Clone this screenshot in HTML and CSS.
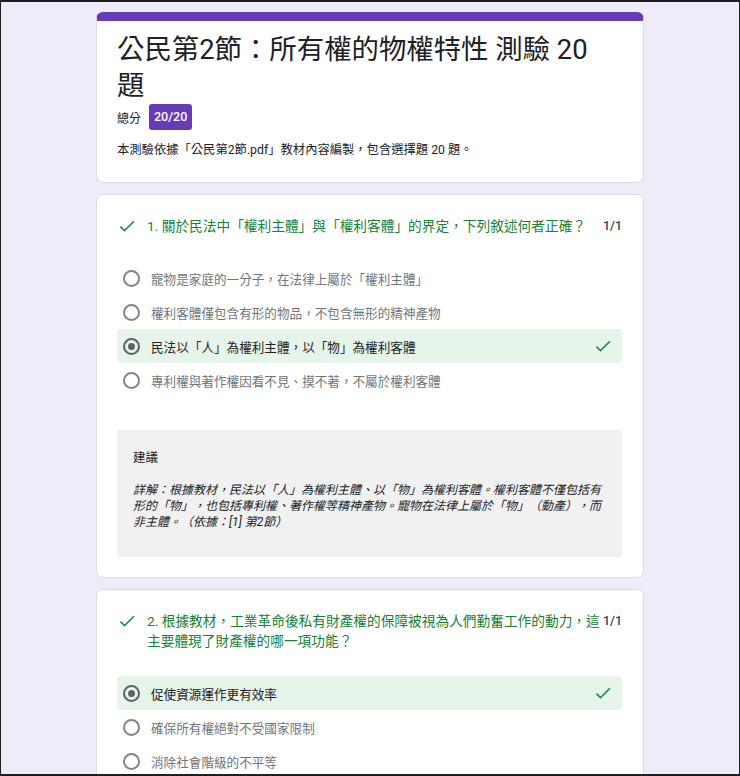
FILE: index.html
```html
<!DOCTYPE html>
<html lang="zh-Hant">
<head>
  <meta charset="UTF-8">
  <meta name="viewport" content="width=device-width, initial-scale=1.0">
  <title>公民第2節 測驗</title>
  <link rel="stylesheet" href="styles.css">
</head>
<body>

<div class="frame">
  <div class="container">

    <div class="card header-card">
      <h1 class="quiz-title">公民第2節：所有權的物權特性 測驗 20 題</h1>
      <div class="score-row">
        <span class="score-label">總分</span>
        <span class="score-badge">20/20</span>
      </div>
      <p class="quiz-desc">本測驗依據「公民第2節.pdf」教材內容編製，包含選擇題 20 題。</p>
    </div>

    <div class="card question-card">
      <div class="q-header">
        <svg class="q-check" viewBox="0 0 24 24"><path d="M9 16.17L4.83 12l-1.42 1.41L9 19 21 7l-1.41-1.41z"/></svg>
        <div class="q-text">1. 關於民法中「權利主體」與「權利客體」的界定，下列敘述何者正確？</div>
        <div class="q-points">1/1</div>
      </div>
      <ul class="options">
        <li class="option"><span class="radio"></span><span class="opt-text">寵物是家庭的一分子，在法律上屬於「權利主體」</span></li>
        <li class="option"><span class="radio"></span><span class="opt-text">權利客體僅包含有形的物品，不包含無形的精神產物</span></li>
        <li class="option correct"><span class="radio"></span><span class="opt-text">民法以「人」為權利主體，以「物」為權利客體</span>
          <svg class="opt-check" viewBox="0 0 24 24"><path d="M9 16.17L4.83 12l-1.42 1.41L9 19 21 7l-1.41-1.41z"/></svg></li>
        <li class="option"><span class="radio"></span><span class="opt-text">專利權與著作權因看不見、摸不著，不屬於權利客體</span></li>
      </ul>
      <div class="feedback">
        <div class="feedback-title">建議</div>
        <p class="feedback-text">詳解：根據教材，民法以「人」為權利主體、以「物」為權利客體。權利客體不僅包括有形的「物」，也包括專利權、著作權等精神產物。寵物在法律上屬於「物」（動產），而非主體。（依據：[1] 第2節）</p>
      </div>
    </div>

    <div class="card question-card">
      <div class="q-header">
        <svg class="q-check" viewBox="0 0 24 24"><path d="M9 16.17L4.83 12l-1.42 1.41L9 19 21 7l-1.41-1.41z"/></svg>
        <div class="q-text">2. 根據教材，工業革命後私有財產權的保障被視為人們勤奮工作的動力，這主要體現了財產權的哪一項功能？</div>
        <div class="q-points">1/1</div>
      </div>
      <ul class="options">
        <li class="option correct"><span class="radio"></span><span class="opt-text">促使資源運作更有效率</span>
          <svg class="opt-check" viewBox="0 0 24 24"><path d="M9 16.17L4.83 12l-1.42 1.41L9 19 21 7l-1.41-1.41z"/></svg></li>
        <li class="option"><span class="radio"></span><span class="opt-text">確保所有權絕對不受國家限制</span></li>
        <li class="option"><span class="radio"></span><span class="opt-text">消除社會階級的不平等</span></li>
      </ul>
    </div>

  </div>
</div>

</body>
</html>
```

FILE: styles.css
```css
body {
  margin: 0;
  background-color: #f0ebf8;
  font-family: Roboto, "Noto Sans CJK TC", sans-serif;
  color: #202124;
  text-spacing-trim: space-all;
}

.frame {
  height: 100vh;
  box-sizing: border-box;
  border: 1px solid #1f1f1f;
  border-top-width: 2px;
  border-bottom-width: 2px;
  overflow: hidden;
}

.container {
  width: 548px;
  margin: 0 auto;
  padding-top: 10px;
}

.card {
  background-color: #fff;
  border: 1px solid #dadce0;
  border-radius: 7px;
  margin-bottom: 11px;
}

.header-card {
  border-top: 9px solid #673ab7;
  padding: 11px 20px 23px 20px;
}

.quiz-title {
  margin: 0;
  padding-right: 12px;
  font-size: 27.4px;
  font-weight: 400;
  line-height: 36px;
}

.score-row {
  display: flex;
  align-items: center;
  gap: 8px;
}

.score-label {
  font-size: 12px;
}

.score-badge {
  background-color: #673ab7;
  color: #fff;
  font-size: 12.5px;
  font-weight: 500;
  padding: 0 5px;
  height: 26px;
  line-height: 26px;
  border-radius: 3px;
}

.quiz-desc {
  margin: 11px 0 0 0;
  font-size: 12.3px;
  line-height: 18px;
}

.question-card {
  padding: 21px 21px 20px 20px;
}

.q-header {
  display: flex;
  align-items: flex-start;
}

.q-check {
  width: 20px;
  height: 20px;
  fill: #1e8e3e;
  flex-shrink: 0;
  margin-right: 10px;
}

.q-text {
  flex: 1;
  color: #188038;
  font-size: 13.7px;
  line-height: 20px;
}

.q-points {
  flex-shrink: 0;
  margin-left: 2px;
  font-size: 12.5px;
  font-weight: 500;
  line-height: 20px;
  color: #3c4043;
}

.options {
  list-style-type: none;
  padding: 0;
  margin: 25px 0 0 0;
}

.option {
  display: flex;
  align-items: center;
  height: 34px;
  padding: 0 9px 0 6px;
  border-radius: 4px;
  color: #70757a;
  font-size: 12.6px;
}

.option.correct {
  background-color: #e6f4ea;
  color: #202124;
}

.radio {
  width: 13px;
  height: 13px;
  border: 2px solid #80868b;
  border-radius: 50%;
  margin-right: 11px;
  flex-shrink: 0;
  display: flex;
  align-items: center;
  justify-content: center;
}

.option.correct .radio {
  border-color: #5f6368;
}

.option.correct .radio::after {
  content: "";
  width: 7px;
  height: 7px;
  border-radius: 50%;
  background-color: #5f6368;
}

.opt-text {
  flex: 1;
}

.opt-check {
  width: 20px;
  height: 20px;
  fill: #1e8e3e;
}

.feedback {
  margin-top: 33px;
  background-color: #f1f1f1;
  padding: 20px 16px 27px 16px;
}

.feedback-title {
  font-size: 12.5px;
  line-height: 16px;
}

.feedback-text {
  margin: 16px 0 0 0;
  font-size: 12px;
  line-height: 16px;
  font-style: italic;
}
```
